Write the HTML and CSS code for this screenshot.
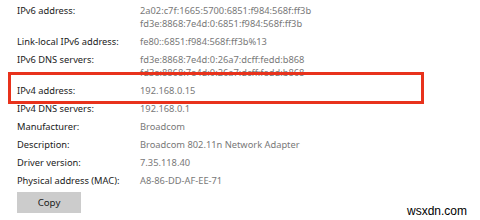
FILE: index.html
```html
<!DOCTYPE html>
<html lang="en">
<head>
<meta charset="UTF-8">
<title>Network properties</title>
<link rel="stylesheet" href="styles.css">
</head>
<body>
<div class="props">
  <div class="row">
    <div class="label">IPv6 address:</div>
    <div class="value">2a02:c7f:1665:5700:6851:f984:568f:ff3b<br>fd3e:8868:7e4d:0:6851:f984:568f:ff3b</div>
  </div>
  <div class="row">
    <div class="label">Link-local IPv6 address:</div>
    <div class="value">fe80::6851:f984:568f:ff3b%13</div>
  </div>
  <div class="row">
    <div class="label">IPv6 DNS servers:</div>
    <div class="value">fd3e:8868:7e4d:0:26a7:dcff:fedd:b868<br>fd3e:8868:7e4d:0:26a7:dcff:fedd:b868</div>
  </div>
  <div class="row">
    <div class="label">IPv4 address:</div>
    <div class="value">192.168.0.15</div>
  </div>
  <div class="row">
    <div class="label">IPv4 DNS servers:</div>
    <div class="value">192.168.0.1</div>
  </div>
  <div class="row">
    <div class="label">Manufacturer:</div>
    <div class="value">Broadcom</div>
  </div>
  <div class="row">
    <div class="label">Description:</div>
    <div class="value">Broadcom 802.11n Network Adapter</div>
  </div>
  <div class="row">
    <div class="label">Driver version:</div>
    <div class="value">7.35.118.40</div>
  </div>
  <div class="row">
    <div class="label">Physical address (MAC):</div>
    <div class="value">A8-86-DD-AF-EE-71</div>
  </div>
  <button class="copy">Copy</button>
  <div class="highlight"></div>
</div>
<div class="watermark">wsxdn.com</div>
</body>
</html>
```

FILE: styles.css
```css
body {
  margin: 0;
  background-color: #fff;
  font-family: 'Noto Sans', 'Open Sans', sans-serif;
  font-size: 9.3px;
  color: #1a1a1a;
  width: 480px;
  height: 220px;
  overflow: hidden;
  position: relative;
}
.props {
  position: relative;
  padding: 4px 0 0 17px;
}
.row {
  display: flex;
  line-height: 13px;
  margin-bottom: 5px;
}
.label {
  width: 123px;
  flex-shrink: 0;
}
.value {
  color: #787878;
}
.copy {
  display: block;
  width: 64px;
  height: 21px;
  border: none;
  background-color: #cccccc;
  color: #1a1a1a;
  font-family: 'Noto Sans', 'Open Sans', sans-serif;
  font-size: 9.7px;
  padding: 0;
}
.highlight {
  position: absolute;
  left: 8px;
  top: 72px;
  width: 410px;
  height: 26px;
  border: 3px solid #e8321c;
}
.watermark {
  position: absolute;
  right: 13px;
  bottom: 2px;
  font-family: 'Liberation Sans', Arial, sans-serif;
  font-size: 12px;
  color: #000;
}
```
